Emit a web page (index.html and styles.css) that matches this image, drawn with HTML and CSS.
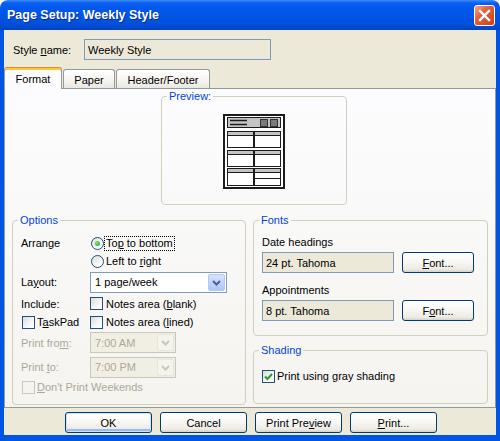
FILE: index.html
```html
<!DOCTYPE html>
<html lang="en">
<head>
    <meta charset="UTF-8">
    <title>Page Setup: Weekly Style</title>
    <link rel="stylesheet" href="styles.css">
</head>
<body>
<div class="window">
    <div class="titlebar">
        <span class="title">Page Setup: Weekly Style</span>
        <span class="close">
            <svg width="19" height="19" viewBox="0 0 19 19"><path d="M5 5l9 9M14 5l-9 9" stroke="#fff" stroke-width="2.4" stroke-linecap="square"/></svg>
        </span>
    </div>
    <div class="frame">
        <div class="style-row">
            <span class="style-label">Style <u>n</u>ame:</span>
            <div class="field style-field">Weekly Style</div>
        </div>

        <div class="tabs">
            <div class="tab active" style="width:58px">Format</div>
            <div class="tab" style="width:52px">Paper</div>
            <div class="tab" style="width:94px">Header/Footer</div>
        </div>

        <div class="panel">
            <fieldset class="group preview">
                <legend>Preview:</legend>
                <svg class="preview-icon" width="62" height="75" viewBox="0 0 62 75">
                    <rect x="1" y="1" width="60" height="73" fill="#fff" stroke="#1c1c1c" stroke-width="2"/>
                    <rect x="4.5" y="3.5" width="53" height="10" fill="#c4c4c4" stroke="#1c1c1c"/>
                    <path d="M7 6.5h17M7 10.5h17" stroke="#1c1c1c" stroke-width="1.6"/>
                    <rect x="37.5" y="5.5" width="7" height="7" fill="#7a7a7a" stroke="#333"/>
                    <rect x="47.5" y="5.5" width="7" height="7" fill="#7a7a7a" stroke="#333"/>
                    <rect x="4.5" y="17.5" width="26" height="16" fill="#fff" stroke="#1c1c1c"/>
                    <rect x="31.5" y="17.5" width="26" height="16" fill="#fff" stroke="#1c1c1c"/>
                    <rect x="4.5" y="36.5" width="26" height="16" fill="#fff" stroke="#1c1c1c"/>
                    <rect x="31.5" y="36.5" width="26" height="16" fill="#fff" stroke="#1c1c1c"/>
                    <rect x="4.5" y="54.5" width="26" height="17" fill="#fff" stroke="#1c1c1c"/>
                    <rect x="31.5" y="54.5" width="26" height="17" fill="#fff" stroke="#1c1c1c"/>
                    <path d="M5 18h25v3H5zM32 18h25v3H32zM5 37h25v3H5zM32 37h25v3H32zM5 55h25v3H5zM32 55h25v3H32z" fill="#c4c4c4"/>
                    <path d="M5 21.5h25M32 21.5h25M5 40.5h25M32 40.5h25M5 58.5h25M32 58.5h25M32 64.5h25" stroke="#1c1c1c"/>
                </svg>
            </fieldset>

            <div class="columns">
                <fieldset class="group options">
                    <legend>Options</legend>
                    <div class="opt-grid">
                        <span>Arrange</span>
                        <div class="choice"><span class="radio checked"></span><span class="focus">To<u>p</u> to bottom</span></div>

                        <span></span>
                        <div class="choice"><span class="radio"></span><span class="after-radio">Left to <u>r</u>ight</span></div>

                        <span>La<u>y</u>out:</span>
                        <div class="select wide">
                            <span>1 page/week</span>
                            <span class="drop"><svg width="15" height="15" viewBox="0 0 15 15"><path d="M4 6l3.5 3.5L11 6" fill="none" stroke="#4d6185" stroke-width="2"/></svg></span>
                        </div>

                        <span>Include:</span>
                        <div class="choice"><span class="check"></span><span>Notes area (<u>b</u>lank)</span></div>

                        <div class="choice taskpad"><span class="check"></span><span>T<u>a</u>skPad</span></div>
                        <div class="choice"><span class="check"></span><span>Notes area (<u>l</u>ined)</span></div>

                        <span class="disabled">Print fro<u>m</u>:</span>
                        <div class="select narrow off">
                            <span>7:00 AM</span>
                            <span class="drop"><svg width="15" height="15" viewBox="0 0 15 15"><path d="M4 6l3.5 3.5L11 6" fill="none" stroke="#c9c7ba" stroke-width="2"/></svg></span>
                        </div>

                        <span class="disabled">Print <u>t</u>o:</span>
                        <div class="select narrow off">
                            <span>7:00 PM</span>
                            <span class="drop"><svg width="15" height="15" viewBox="0 0 15 15"><path d="M4 6l3.5 3.5L11 6" fill="none" stroke="#c9c7ba" stroke-width="2"/></svg></span>
                        </div>

                        <div class="choice taskpad disabled span2"><span class="check off"></span><span><u>D</u>on't Print Weekends</span></div>
                    </div>
                </fieldset>

                <div class="right">
                    <fieldset class="group fonts">
                        <legend>Fonts</legend>
                        <div class="font-label">Date headings</div>
                        <div class="font-row">
                            <div class="field font-field">24 pt. Tahoma</div>
                            <div class="button"><span><u>F</u>ont...</span></div>
                        </div>
                        <div class="font-label">Appointments</div>
                        <div class="font-row">
                            <div class="field font-field">8 pt. Tahoma</div>
                            <div class="button"><span>F<u>o</u>nt...</span></div>
                        </div>
                    </fieldset>
                    <fieldset class="group shading">
                        <legend>Shading</legend>
                        <div class="choice shade-row">
                            <span class="check"><svg width="11" height="11" viewBox="0 0 11 11"><path d="M2 5.5l2.5 2.5L9 3" fill="none" stroke="#21a121" stroke-width="2"/></svg></span>
                            <span>Print using <u>g</u>ray shading</span>
                        </div>
                    </fieldset>
                </div>
            </div>
        </div>

        <div class="buttons">
            <div class="button default">OK</div>
            <div class="button">Cancel</div>
            <div class="button"><span>Print Pre<u>v</u>iew</span></div>
            <div class="button"><span><u>P</u>rint...</span></div>
        </div>
    </div>
</div>
</body>
</html>
```

FILE: styles.css
```css
body{
    margin: 0;
    background: #fff;
    font-family: "Liberation Sans", Arial, sans-serif;
    font-size: 11px;
    color: #000;
}
.window{
    width: 500px;
    height: 441px;
    display: flex;
    flex-direction: column;
}
.titlebar{
    height: 30px;
    flex: none;
    box-sizing: border-box;
    display: flex;
    align-items: center;
    justify-content: space-between;
    padding: 0 5px 0 7px;
    border-radius: 8px 8px 0 0;
    background: linear-gradient(#3c8ef8 0, #0a5ef0 3px, #0058ec 9px, #0054e3 18px, #004ed8 25px, #0042c2 30px);
}
.title{
    color: #fff;
    font-weight: bold;
    font-size: 12.5px;
    text-shadow: 1px 1px #0c2c8a;
}
.close{
    width: 21px;
    height: 21px;
    box-sizing: border-box;
    border: 1px solid #fff;
    border-radius: 3px;
    background: linear-gradient(135deg, #f2a58a, #e2603a 40%, #c8401c);
    display: flex;
    align-items: center;
    justify-content: center;
}
.frame{
    flex: 1;
    display: flex;
    flex-direction: column;
    background: #ece9d8;
    border: solid #0055e5;
    border-width: 0 4px 6px;
}

.style-row{
    display: flex;
    align-items: center;
    height: 21px;
    margin: 9px 0 0 9px;
}
.style-label{
    width: 71px;
}
.field{
    height: 21px;
    box-sizing: border-box;
    border: 1px solid #7f9db9;
    background: #ece9d8;
    padding-left: 3px;
    display: flex;
    align-items: center;
}
.style-field{
    width: 187px;
}

/* tabs */
.tabs{
    display: flex;
    align-items: flex-end;
    gap: 1px;
    height: 22px;
    margin-top: 7px;
    margin-bottom: -1px;
    position: relative;
    z-index: 1;
}
.tab{
    height: 19px;
    margin-bottom: 1px;
    box-sizing: border-box;
    border: 1px solid #919b9c;
    border-bottom: none;
    border-radius: 3px 3px 0 0;
    background: linear-gradient(#fff, #f5f4f0 60%, #e8e7e0);
    display: flex;
    align-items: center;
    justify-content: center;
    padding-top: 1px;
}
.tab.active{
    height: 22px;
    margin-bottom: 0;
    border-top: 1px solid #e68b2c;
    box-shadow: inset 0 2px #ffc83c;
    background: #fcfcfe;
    padding-top: 0;
}

.panel{
    height: 320px;
    flex: none;
    box-sizing: border-box;
    border: 1px solid #919b9c;
    background: linear-gradient(#fcfcfe, #f5f4ef);
    padding: 1px 7px 0 7px;
}

/* group boxes */
.group{
    margin: 0;
    min-width: 0;
    box-sizing: border-box;
    border: 1px solid #d0d0bf;
    border-radius: 4px;
    padding: 7px 8px 0 8px;
}
.group legend{
    color: #0046d5;
    line-height: 13px;
    padding: 0 2px;
    margin-left: -3px;
}
.preview{
    width: 186px;
    height: 115px;
    margin-left: 149px;
}
.preview-icon{
    display: block;
    margin: 4px auto 0;
}
.columns{
    display: grid;
    grid-template-columns: 234px 235px;
    gap: 7px;
    margin-top: 9px;
}
.options{
    height: 191px;
}
.right{
    display: flex;
    flex-direction: column;
    gap: 8px;
}
.fonts{
    height: 122px;
}
.shading{
    height: 60px;
}

/* options grid */
.opt-grid{
    display: grid;
    grid-template-columns: 69px 1fr;
    grid-template-rows: 18px 18px 24px 19px 18px 23px 26px 14px;
    align-items: center;
}
.choice{
    display: flex;
    align-items: center;
    gap: 3px;
}
.taskpad{
    margin-left: 1px;
    gap: 2px;
}
.span2{
    grid-column: 1 / 3;
}
.disabled{
    color: #aca899;
}
.radio{
    width: 13px;
    height: 13px;
    box-sizing: border-box;
    margin-left: 1px;
    border: 1px solid #1c5180;
    border-radius: 50%;
    background: linear-gradient(135deg, #dcdcd7, #fff 80%);
    display: flex;
    align-items: center;
    justify-content: center;
}
.radio.checked::after{
    content: "";
    width: 5px;
    height: 5px;
    border-radius: 50%;
    background: radial-gradient(circle at 40% 35%, #7ee37a, #21a121);
}
.focus{
    outline: 1px dotted #000;
    padding: 0 1px;
    margin-left: -2px;
    line-height: 13px;
}
.after-radio{
    margin-left: -1px;
}
.check{
    width: 13px;
    height: 13px;
    box-sizing: border-box;
    border: 1px solid #1c5180;
    background: linear-gradient(135deg, #dcdcd7, #fff 80%);
    display: flex;
    align-items: center;
    justify-content: center;
}
.check.off{
    border-color: #cac8bb;
    background: #f5f4ef;
}

/* combo boxes */
.select{
    height: 21px;
    box-sizing: border-box;
    border: 1px solid #7f9db9;
    background: #fff;
    padding: 1px 1px 1px 4px;
    display: flex;
    align-items: center;
    justify-content: space-between;
}
.select.wide{
    width: 137px;
}
.select.narrow{
    width: 86px;
}
.select.off{
    border-color: #c9c7ba;
    background: #f1efe4;
    color: #aca899;
}
.drop{
    width: 17px;
    height: 17px;
    box-sizing: border-box;
    border: 1px solid #b4c8f6;
    border-radius: 2px;
    background: linear-gradient(#d7e3fc, #c1d3fb 50%, #aec6f8);
    display: flex;
    align-items: center;
    justify-content: center;
}
.off .drop{
    border-color: #e8e6dc;
    background: #f4f3ee;
}

/* fonts */
.font-label{
    line-height: 16px;
}
.font-row{
    display: flex;
    gap: 8px;
    margin-top: 2px;
}
.font-row + .font-label{
    margin-top: 9px;
}
.font-field{
    width: 132px;
}
.font-row .button{
    width: 72px;
}
.shade-row{
    margin-top: 3px;
    height: 18px;
    gap: 2px;
}

/* buttons */
.button{
    height: 21px;
    box-sizing: border-box;
    border: 1px solid #003c74;
    border-radius: 3px;
    background: linear-gradient(#fff, #f8f8f5 45%, #ecebe6 85%, #d8d2c6);
    display: flex;
    align-items: center;
    justify-content: center;
}
.button.default{
    box-shadow: inset 0 0 0 1px #cee0fa, inset 0 -2px 0 1px #9bbbec;
}
.buttons{
    display: flex;
    gap: 8px;
    margin: 4px 0 0 61px;
}
.buttons .button{
    width: 87px;
}
```
